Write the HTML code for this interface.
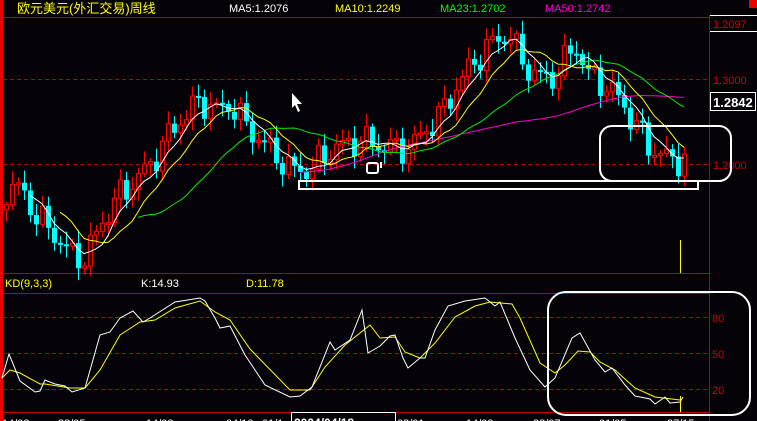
<!DOCTYPE html>
<html><head><meta charset="utf-8"><style>
html,body{margin:0;padding:0;background:#050308;width:757px;height:421px;overflow:hidden}
svg{display:block}
text{font-family:"Liberation Sans","Noto Sans CJK SC",sans-serif}
</style></head><body>
<svg id="s" width="757" height="421" viewBox="0 0 757 421" xmlns="http://www.w3.org/2000/svg">
<rect width="757" height="421" fill="#050308"/>
<rect x="0" y="0" width="3" height="421" fill="#e00"/>
<line x1="3" y1="17.5" x2="709" y2="17.5" stroke="#b00" stroke-width="1"/>
<line x1="3" y1="273.5" x2="709" y2="273.5" stroke="#b00" stroke-width="1"/>
<line x1="3" y1="293.5" x2="709" y2="293.5" stroke="#b00" stroke-width="1"/>
<line x1="3" y1="412.5" x2="709" y2="412.5" stroke="#b00" stroke-width="1"/>
<line x1="709.5" y1="15" x2="709.5" y2="421" stroke="#b00" stroke-width="1"/>
<rect x="749" y="0" width="8" height="8" fill="#e00"/>
<line x1="710" y1="15.5" x2="757" y2="15.5" stroke="#fff"/>
<line x1="710" y1="31.5" x2="757" y2="31.5" stroke="#fff"/>
<g stroke="#b00" stroke-dasharray="4,3" stroke-width="1">
<line x1="3" y1="79.5" x2="709" y2="79.5"/>
<line x1="3" y1="164.5" x2="709" y2="164.5"/>
<line x1="3" y1="317.5" x2="709" y2="317.5"/>
<line x1="3" y1="353.5" x2="709" y2="353.5"/>
<line x1="3" y1="389.5" x2="709" y2="389.5"/>
</g>
<text x="17" y="13" font-size="13" fill="#ff0">欧元美元(外汇交易)周线</text>
<text x="229" y="12" font-size="11" fill="#fff">MA5:1.2076</text>
<text x="335" y="12" font-size="11" fill="#ff0">MA10:1.2249</text>
<text x="440" y="12" font-size="11" fill="#0f0">MA23:1.2702</text>
<text x="545" y="12" font-size="11" fill="#f0c">MA50:1.2742</text>
<text x="713" y="28" font-size="11" fill="#c00">1.2097</text>
<text x="713" y="84" font-size="11" fill="#c00">1.3000</text>
<rect x="710.5" y="92.5" width="45" height="18" fill="none" stroke="#fff"/>
<text x="713" y="107" font-size="13" font-weight="bold" fill="#fff">1.2842</text>
<text x="713" y="169" font-size="11" fill="#c00">1.2000</text>
<text x="712" y="322" font-size="11" fill="#c00">80</text>
<text x="712" y="358" font-size="11" fill="#c00">50</text>
<text x="712" y="394" font-size="11" fill="#c00">20</text>
<text x="5" y="287" font-size="11" fill="#ff0">KD(9,3,3)</text>
<text x="141" y="287" font-size="11" fill="#fff">K:14.93</text>
<text x="246" y="287" font-size="11" fill="#ff0">D:11.78</text>
<g id="cand"></g>
<g id="ma"></g>
<polyline fill="none" stroke="#ff0" stroke-width="1" points="2,378 10,370 20,373 40,384 45,384 70,388 85,388 100,370 120,335 140,322 155,320 175,308 200,301 215,312 230,320 250,349 290,390 310,390 325,367 345,345 370,325 380,338 395,337 405,352 420,358 435,343 455,317 475,306 490,302 512,304 520,318 540,363 555,373 565,365 578,351 590,352 600,362 615,370 635,388 655,397 680,400"/>
<polyline fill="none" stroke="#fff" stroke-width="1" points="2,378 9,354 20,381 35,392 40,391 45,380 55,384 65,386 72,392 85,388 100,335 110,332 120,318 133,311 143,322 150,318 175,302 200,298 205,301 215,318 220,328 230,326 245,355 265,385 290,397 300,396 312,387 330,342 335,350 350,340 362,310 368,353 380,346 390,336 395,335 403,358 408,368 420,358 425,358 435,330 448,306 465,301 485,298 495,306 500,302 515,338 530,370 545,387 555,378 572,338 580,333 595,360 605,372 612,368 625,385 635,396 650,399 655,404 665,397 670,403 680,402 683,397"/>
<line x1="680.5" y1="396" x2="680.5" y2="412" stroke="#ff0"/>
<line x1="680.5" y1="240" x2="680.5" y2="273" stroke="#ff0"/>
<rect x="600" y="126" width="131" height="55" rx="12" fill="none" stroke="#fff" stroke-width="2"/>
<rect x="299" y="181" width="399" height="8" fill="none" stroke="#fff" stroke-width="2"/>
<rect x="367" y="163" width="11" height="10" rx="2" fill="none" stroke="#fff" stroke-width="2"/>
<rect x="380" y="162" width="2" height="6" fill="#fff"/>
<rect x="548" y="292" width="202" height="123" rx="18" fill="none" stroke="#fff" stroke-width="2"/>
<path d="M292,93 L292,108 L295,105 L298,112 L300,111 L297,104 L302,104 Z" fill="#fff"/>
<g font-size="11" fill="#fff">
<text x="2" y="427">14/03</text><text x="58" y="427">28/05</text><text x="146" y="427">14/08</text>
<text x="226" y="427">04/10</text><text x="262" y="427">01/1</text>
<text x="397" y="427">03/01</text><text x="466" y="427">14/09</text><text x="533" y="427">28/07</text>
<text x="599" y="427">01/05</text><text x="667" y="427">27/15</text>
</g>
<rect x="291.5" y="412.5" width="104" height="10" fill="#050308" stroke="#fff"/>
<text x="294" y="427" font-size="12" font-weight="bold" fill="#fff">2004/04/18</text>
</svg>
<script>
(function(){
var kp=[[6,190],[20,188],[35,215],[55,235],[70,255],[85,258],[100,225],[115,200],[130,185],[150,165],[165,140],[180,120],[200,100],[215,110],[232,105],[245,125],[265,145],[290,170],[310,170],[330,150],[360,140],[390,148],[410,148],[425,130],[440,115],[460,80],[480,55],[495,40],[510,35],[520,60],[535,75],[550,80],[565,60],[575,45],[590,78],[605,85],[620,100],[635,125],[650,148],[665,158],[684,160]];
function interp(x){for(var i=0;i<kp.length-1;i++){if(x<=kp[i+1][0]){var a=kp[i],b=kp[i+1],t=(x-a[0])/(b[0]-a[0]);return a[1]+(b[1]-a[1])*t;}}return kp[kp.length-1][1];}
var closes=[],xs=[];
for(var x=6;x<=684;x+=6){xs.push(x);closes.push(interp(x)+Math.sin(x*1.3)*11+Math.sin(x*0.41)*6);}
var g='';
for(var i=0;i<closes.length;i++){
 var x=xs[i],c=closes[i],o=i?closes[i-1]:c+5;
 var up=c<o,top=Math.min(o,c),bot=Math.max(o,c);if(bot-top<2){bot=top+2;}
 var hi=top-3-Math.abs(Math.sin(i*1.7))*10,lo=bot+3+Math.abs(Math.cos(i*1.3))*9;
 if(up){g+='<line x1="'+(x+.5)+'" y1="'+hi+'" x2="'+(x+.5)+'" y2="'+lo+'" stroke="#f00"/>';
  g+='<rect x="'+(x-2)+'.5" y="'+top+'" width="4" height="'+(bot-top)+'" fill="#050308" stroke="#f00"/>';}
 else{g+='<line x1="'+(x+.5)+'" y1="'+hi+'" x2="'+(x+.5)+'" y2="'+lo+'" stroke="#0ff"/>';
  g+='<rect x="'+(x-2)+'" y="'+top+'" width="5" height="'+(bot-top)+'" fill="#0ff"/>';}
}
document.getElementById('cand').innerHTML=g;
function ma(n,col){var p=[];for(var i=n-1;i<closes.length;i++){var s=0;for(var j=0;j<n;j++)s+=closes[i-j];p.push(xs[i]+','+(s/n).toFixed(1));}return '<polyline fill="none" stroke="'+col+'" points="'+p.join(' ')+'"/>';}
document.getElementById('ma').innerHTML=ma(50,'#f0c')+ma(23,'#0e0')+ma(10,'#ff0')+ma(5,'#fff');
})();
</script>
</body></html>
